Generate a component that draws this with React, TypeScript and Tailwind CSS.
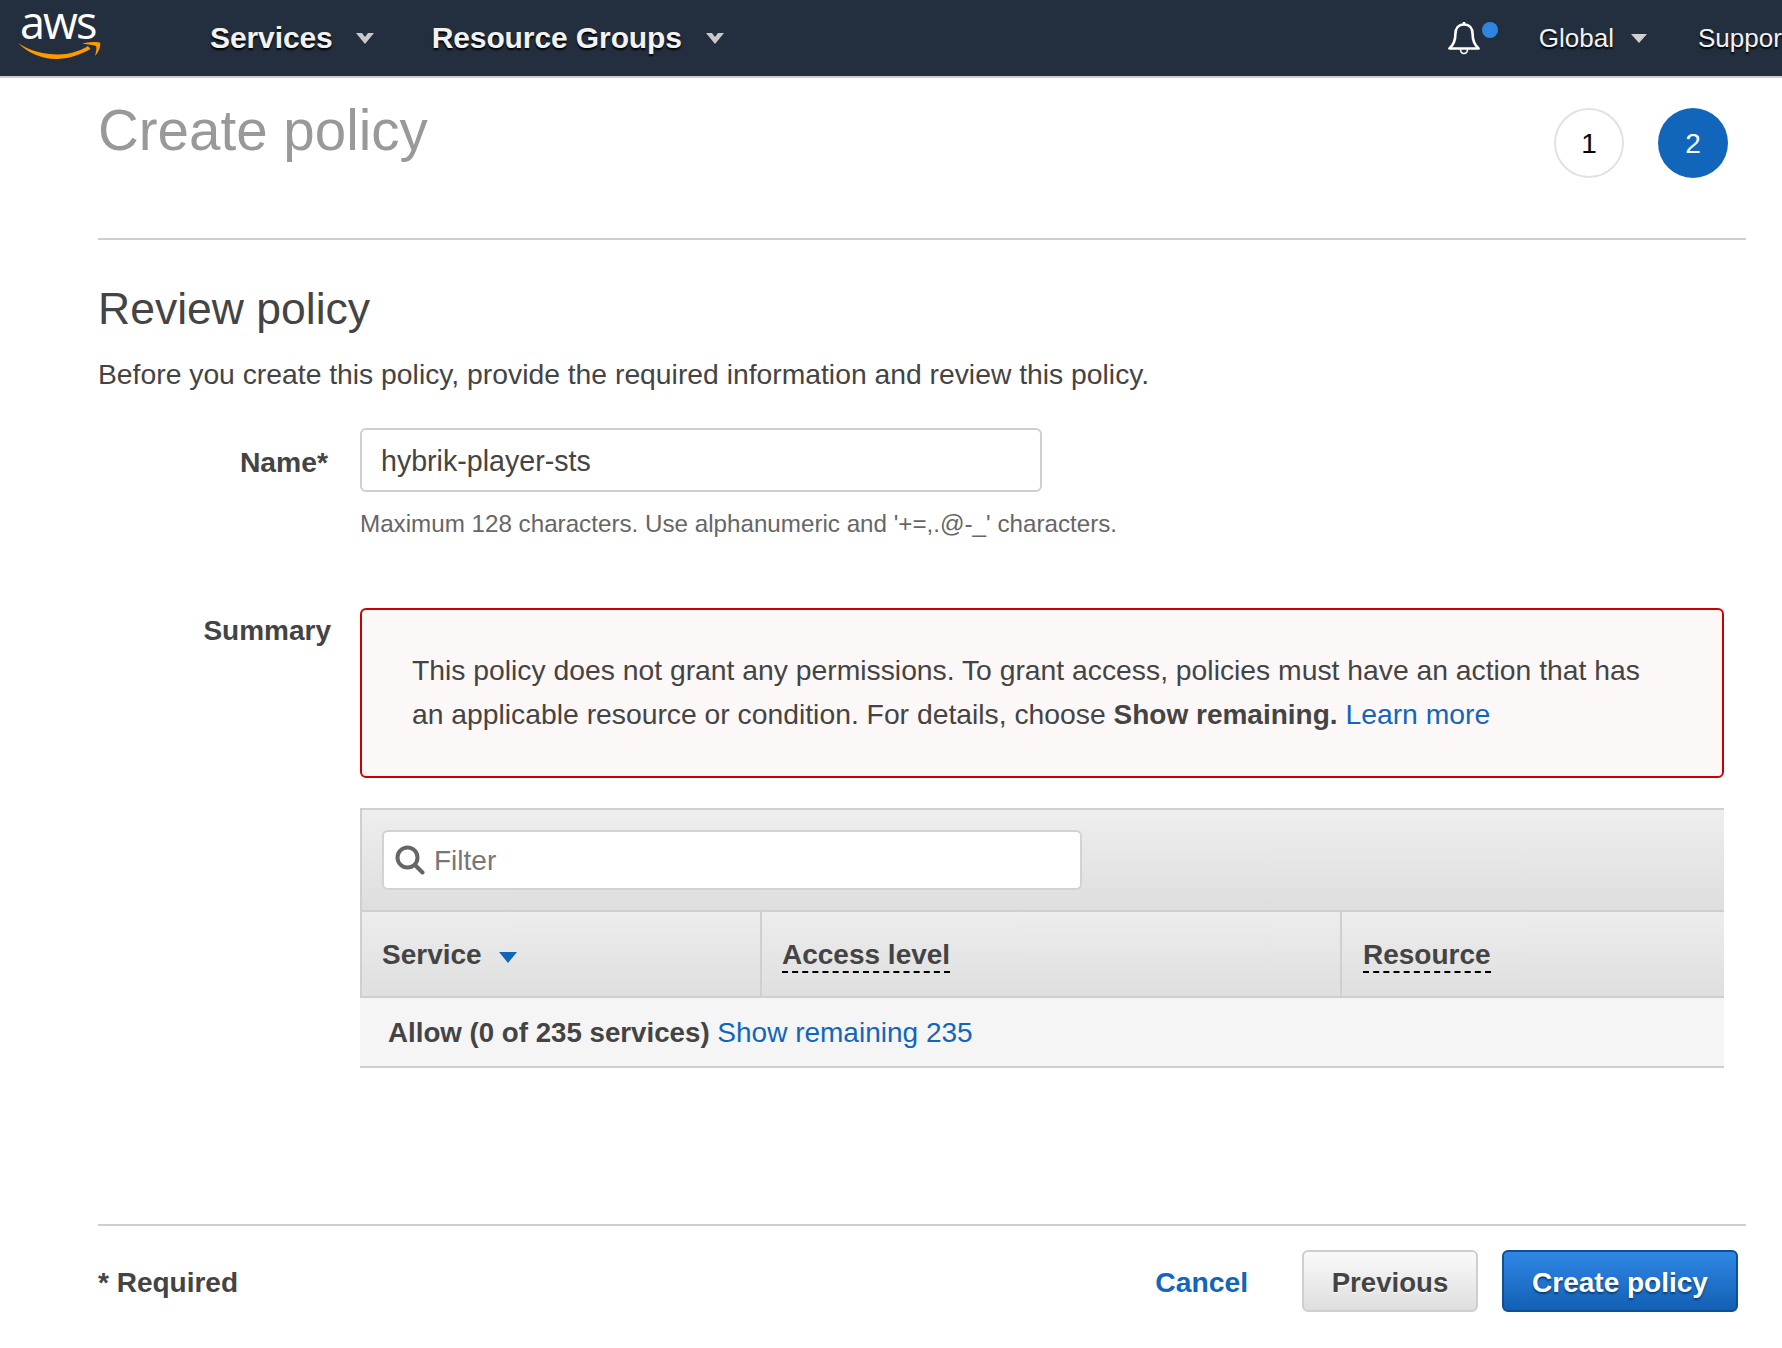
function NavCaret() {
  return (
    <svg width="18" height="12" viewBox="0 0 18 12" className="shrink-0 mt-[2px]">
      <path d="M0 1h6l3 4 3-4h6l-9 11z" fill="#c9c9c9" />
    </svg>
  )
}

function SmallCaret() {
  return (
    <svg width="16" height="9" viewBox="0 0 16 9" className="shrink-0">
      <path d="M0 0h16l-8 9z" fill="#d0d0d0" />
    </svg>
  )
}

function Bell() {
  return (
    <svg width="32" height="34" viewBox="0 0 32 34" fill="none" stroke="#fff" strokeWidth="2.600" strokeLinejoin="round">
      <path d="M16 3.500c-5.500 0-8.600 4-8.600 9.500 0 6.500-2 11-6 14.500h29.200c-4-3.500-6-8-6-14.500 0-5.500-3.100-9.500-8.600-9.500z" />
      <path d="M16 1v2.500" />
      <path d="M12.500 28c0 3 1.500 4.500 3.500 4.500s3.500-1.500 3.500-4.500" strokeWidth="1.500" />
    </svg>
  )
}

function Logo() {
  return (
    <div className="flex flex-col items-start w-[84px] ml-[18px]">
      <span className="font-['Open_Sans',sans-serif] text-white text-[45px] leading-[30px] tracking-[-2px] ml-[2px] -mt-[10px] [text-shadow:none]">
        aws
      </span>
      <svg width="84" height="18" viewBox="0 0 84 18" className="mt-[5px]">
        <path d="M0 1c12 8 26 11.500 40 11.500 11 0 21-3 30-8.500l2.500 3C62 13 50 17 38 17 24 17 10 11 0 1z" fill="#f90" />
        <path d="M64 1.500C70 0 78-.5 82 .5c1 2.500-1 9.500-5 13.500 1-4 2-8 1-10-3-1-8-1.500-14-2.500z" fill="#f90" />
      </svg>
    </div>
  )
}

function Header() {
  return (
    <header className="h-[78px] bg-[#232f3e] border-b-2 border-[#cfcfcf] flex items-center whitespace-nowrap [text-shadow:0_2px_2px_#000] text-[#f2f2f2]">
      <Logo />
      <div className="ml-[108px] -mt-[2px] flex items-center text-[30px] font-bold -tracking-[0.1px]">
        <span>Services</span>
        <span className="ml-[23px]"><NavCaret /></span>
        <span className="ml-[58px]">Resource Groups</span>
        <span className="ml-[24px]"><NavCaret /></span>
      </div>
      <div className="ml-auto flex items-center text-[26px] relative">
        <Bell />
        <span className="w-[16px] h-[16px] rounded-full bg-[#2f86e0] ml-[2px] -mt-[16px]" />
        <span className="ml-[41px]">Global</span>
        <span className="ml-[17px]"><SmallCaret /></span>
        <span className="ml-[51px] w-[84px] overflow-hidden">Support</span>
      </div>
    </header>
  )
}

function Steps() {
  return (
    <div className="flex gap-[34px] pr-[18px] mt-[5px] text-[28px]">
      <div className="w-[70px] h-[70px] pt-[2px] rounded-full border-2 border-[#e2e2e2] flex items-center justify-center text-black">1</div>
      <div className="w-[70px] h-[70px] pt-[2px] rounded-full bg-[#1166bb] flex items-center justify-center text-white">2</div>
    </div>
  )
}

function Caret() {
  return (
    <svg width="18" height="11" viewBox="0 0 18 11" className="ml-[17px] mt-[4px]">
      <path d="M0 0h18l-9 11z" fill="#1166bb" />
    </svg>
  )
}

function ResourceTable() {
  return (
    <div className="mt-[30px]">
      <div className="h-[104px] border-t-2 border-l-2 border-b-2 border-[#cfcfcf] bg-gradient-to-b from-[#eeeeee] to-[#dedede] pl-[20px] pt-[20px]">
        <div className="w-[700px] h-[60px] bg-white border-2 border-[#d2d2d2] rounded-[6px] flex items-center pl-[11px] gap-[9px]">
          <svg width="30" height="30" viewBox="0 0 30 30" fill="none" stroke="#666" strokeWidth="4" strokeLinecap="round">
            <circle cx="12.500" cy="12.500" r="10" />
            <path d="M20 20l7.500 7.500" />
          </svg>
          <span className="text-[28px] text-[#777] pt-[2px]">Filter</span>
        </div>
      </div>
      <div className="h-[86px] border-l-2 border-b-2 border-[#cfcfcf] bg-gradient-to-b from-[#ededed] to-[#dfdfdf] flex text-[28px] font-bold text-[#444]">
        <div className="w-[400px] border-r-2 border-[#cfcfcf] pl-[20px] pt-[2px] flex items-center">
          <span>Service</span>
          <Caret />
        </div>
        <div className="w-[580px] border-r-2 border-[#cfcfcf] pl-[20px] pt-[1px] flex items-center">
          <span className="border-b-2 border-dashed border-black leading-[33px] mt-[2px]">Access level</span>
        </div>
        <div className="flex-1 pl-[21px] pt-[1px] flex items-center">
          <span className="border-b-2 border-dashed border-black leading-[33px] mt-[2px]">Resource</span>
        </div>
      </div>
      <div className="h-[70px] bg-[#f5f5f5] border-b-2 border-[#cfcfcf] pl-[28px] pt-[2px] flex items-center text-[28px] text-[#444] whitespace-pre">
        <span className="font-bold text-[27.700px]">Allow (0 of 235 services) </span>
        <a className="text-[#1166bb]">Show remaining 235</a>
      </div>
    </div>
  )
}

export default function App() {
  return (
    <div className="w-[1782px] h-[1348px] overflow-hidden bg-white font-['Liberation_Sans',sans-serif] text-[#444]">
      <Header />
      <main className="ml-[98px] w-[1648px]">
        <div className="h-[162px] border-b-2 border-[#cfcfcf] flex justify-between items-start pt-[25px]">
          <h1 className="text-[56.500px] leading-[56px] text-[#999]">Create policy</h1>
          <Steps />
        </div>

        <h2 className="mt-[43px] text-[44.500px] leading-[52px]">Review policy</h2>
        <p className="mt-[21px] text-[28.300px] leading-[36px]">
          Before you create this policy, provide the required information and review this policy.
        </p>

        <div className="mt-[36px] flex items-center">
          <label className="w-[262px] pr-[32px] pt-[4px] text-right text-[28.300px] font-bold">Name*</label>
          <div className="w-[682px] h-[64px] border-2 border-[#cfcfcf] rounded-[6px] pl-[19px] pt-[2px] flex items-center text-[28.600px]">
            hybrik-player-sts
          </div>
        </div>
        <p className="mt-[16px] ml-[262px] text-[24.200px] leading-[32px] text-[#666]">
          Maximum 128 characters. Use alphanumeric and '+=,.@-_' characters.
        </p>

        <div className="mt-[68px] flex items-start">
          <div className="w-[262px] pr-[29px] pt-[5px] text-right text-[28px] leading-[36px] font-bold">Summary</div>
          <div className="w-[1364px]">
            <div className="h-[170px] border-2 border-[#cc0000] rounded-[6px] bg-[#fcf8f7] pl-[50px] pr-[60px] pt-[38px] text-[28.300px] leading-[44px]">
              This policy does not grant any permissions. To grant access, policies must have an action that has an applicable resource or condition. For details, choose <b className="text-[28px]">Show remaining.</b> <a className="text-[#1166bb]">Learn more</a>
            </div>
            <ResourceTable />
          </div>
        </div>

        <div className="mt-[156px] border-t-2 border-[#cfcfcf] pt-[24px] flex items-center pr-[8px]">
          <span className="text-[28px] font-bold mr-auto mt-[4px]">* Required</span>
          <a className="text-[28.300px] font-bold text-[#1166bb] mr-[54px] mt-[3px]">Cancel</a>
          <button className="w-[176px] h-[62px] pt-[4px] rounded-[6px] border-2 border-[#cfcfcf] bg-gradient-to-b from-[#fafafa] to-[#dedede] text-[27.600px] font-bold text-[#444] [text-shadow:0_1px_1px_#fff]">
            Previous
          </button>
          <button className="ml-[24px] w-[236px] h-[62px] pt-[4px] rounded-[6px] border-2 border-[#0f4f95] bg-gradient-to-b from-[#2f88e6] to-[#1260b4] text-[28px] font-bold text-white [text-shadow:0_2px_2px_#0b3f78]">
            Create policy
          </button>
        </div>
      </main>
    </div>
  )
}
